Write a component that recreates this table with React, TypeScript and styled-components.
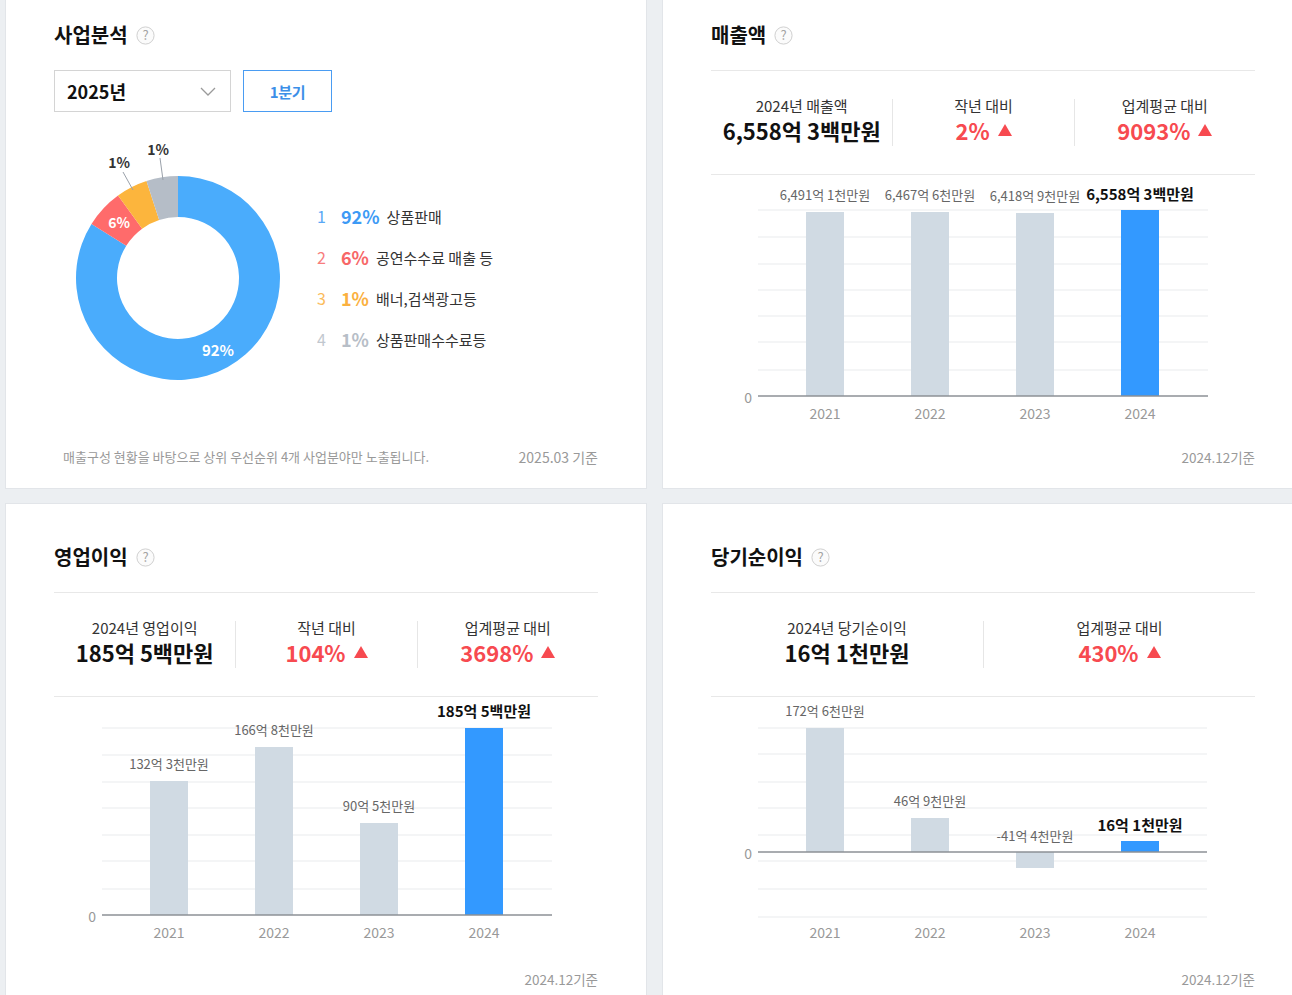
import React from "react";
import styled, { createGlobalStyle } from "styled-components";

const Global = createGlobalStyle`
  html, body { margin: 0; padding: 0; background: #eceff2; overflow: hidden; }
  body { font-family: "Noto Sans CJK KR", "Noto Sans", sans-serif; color: #222; }
  * { box-sizing: border-box; }
`;

const FONT = `"Noto Sans CJK KR", "Noto Sans", sans-serif`;
const RED = "#f74a50";

const Page = styled.div`
  display: grid;
  grid-template-columns: 642px 642px;
  column-gap: 15px;
  row-gap: 14px;
  padding-left: 5px;
  margin-top: -19px;
  width: 1320px;
`;

const Card = styled.section`
  height: 508px;
  background: #fff;
  border: 1px solid #e2e5e9;
  padding: 39px 48px 22px;
  display: flex;
  flex-direction: column;
`;

const TitleRow = styled.div`
  display: flex;
  align-items: center;
  gap: 8px;
  height: 28px;
`;

const Title = styled.h2`
  margin: 0;
  font-size: 20px;
  line-height: 28px;
  font-weight: 700;
  color: #111;
`;

const Controls = styled.div`
  display: flex;
  gap: 12px;
  margin-top: 21px;
  height: 42px;
`;

const Select = styled.div`
  width: 177px;
  height: 42px;
  border: 1px solid #d4d4d4;
  display: flex;
  align-items: center;
  justify-content: space-between;
  padding: 0 14px 0 12px;
  font-size: 18px;
  font-weight: 700;
  color: #111;
`;

const QuarterButton = styled.button`
  width: 89px;
  height: 42px;
  border: 1px solid #4a9cf2;
  background: #fff;
  color: #3c8fe8;
  font-family: inherit;
  font-size: 15px;
  font-weight: 700;
  letter-spacing: -0.3px;
  padding: 0;
`;

const DonutRow = styled.div`
  display: flex;
  margin-top: 19px;
`;

const DonutSvg = styled.svg`
  display: block;
  flex: 0 0 263px;
  font-family: ${FONT};
`;

const Legend = styled.ul`
  list-style: none;
  margin: 0;
  padding: 73px 0 0;
  display: flex;
  flex-direction: column;
  gap: 17px;
`;

const LegendItem = styled.li`
  display: flex;
  align-items: center;
  height: 24px;
`;

const LegendNo = styled.span<{ $c: string }>`
  width: 24px;
  font-size: 16px;
  color: ${(p) => p.$c};
  opacity: 0.85;
`;

const LegendPct = styled.span<{ $c: string }>`
  font-size: 18px;
  font-weight: 700;
  color: ${(p) => p.$c};
  margin-right: 7px;
`;

const LegendName = styled.span`
  font-size: 15px;
  color: #333;
`;

const Stats = styled.div<{ $cols: number }>`
  margin-top: 21px;
  border-top: 1px solid #e8e8e8;
  border-bottom: 1px solid #e8e8e8;
  padding: 28px 0;
  display: grid;
  grid-template-columns: repeat(${(p) => p.$cols}, 1fr);
`;

const Stat = styled.div`
  display: flex;
  flex-direction: column;
  align-items: center;
  height: 47px;
  & + & {
    border-left: 1px solid #e6e6e6;
  }
`;

const StatLabel = styled.div`
  font-size: 15px;
  line-height: 18px;
  margin-top: -2px;
  color: #333;
`;

const StatValue = styled.div<{ $red?: boolean }>`
  font-size: 22px;
  line-height: 30px;
  font-weight: 700;
  color: ${(p) => (p.$red ? RED : "#111")};
  display: flex;
  align-items: center;
  gap: 8px;
`;

const ChartSvg = styled.svg`
  display: block;
  margin-top: 1px;
  font-family: ${FONT};
`;

const Footer = styled.div<{ $split?: boolean }>`
  margin-top: auto;
  display: flex;
  justify-content: ${(p) => (p.$split ? "space-between" : "flex-end")};
  align-items: center;
  line-height: 18px;
  font-size: 13.5px;
  color: #999;
`;

const FooterNote = styled.span`
  padding-left: 9px;
  font-size: 13px;
  color: #999;
`;

const FooterDate = styled.span`
  font-size: 14px;
`;

const HelpIcon = () => (
  <svg width="19" height="19" viewBox="0 0 19 19">
    <circle cx="9.5" cy="9.5" r="8.6" fill="#fbfbfb" stroke="#cfcfcf" strokeWidth="1" />
    <text x="9.5" y="14" textAnchor="middle" fontSize="13" fill="#a3a3a3" fontFamily={FONT}>
      ?
    </text>
  </svg>
);

const Chevron = () => (
  <svg width="16" height="9" viewBox="0 0 16 9">
    <polyline points="1,1 8,8 15,1" fill="none" stroke="#9a9a9a" strokeWidth="1.3" />
  </svg>
);

const UpTriangle = () => (
  <svg width="14" height="12" viewBox="0 0 14 12">
    <polygon points="7,0 14,12 0,12" fill={RED} />
  </svg>
);

const Header = ({ title }: { title: string }) => (
  <TitleRow>
    <Title>{title}</Title>
    <HelpIcon />
  </TitleRow>
);

/* ---------- donut ---------- */
const CX = 124;
const CY = 147;
const pt = (r: number, a: number) => {
  const rad = (a * Math.PI) / 180;
  return [CX + r * Math.sin(rad), CY - r * Math.cos(rad)];
};
const arc = (r0: number, r1: number, a0: number, a1: number) => {
  const large = a1 - a0 > 180 ? 1 : 0;
  const [x0, y0] = pt(r1, a0);
  const [x1, y1] = pt(r1, a1);
  const [x2, y2] = pt(r0, a1);
  const [x3, y3] = pt(r0, a0);
  return `M${x0},${y0} A${r1},${r1} 0 ${large} 1 ${x1},${y1} L${x2},${y2} A${r0},${r0} 0 ${large} 0 ${x3},${y3} Z`;
};

const segments = [
  { a0: 0, a1: 302, fill: "#4aacfc" },
  { a0: 302, a1: 324, fill: "#ff6b6b" },
  { a0: 324, a1: 342, fill: "#fcb53d" },
  { a0: 342, a1: 360, fill: "#b5bdc7" },
];

const legend = [
  { no: "1", pct: "92%", name: "상품판매", c: "#3d9af5" },
  { no: "2", pct: "6%", name: "공연수수료 매출 등", c: "#f76767" },
  { no: "3", pct: "1%", name: "배너,검색광고등", c: "#fbb13f" },
  { no: "4", pct: "1%", name: "상품판매수수료등", c: "#b7bec7" },
];

const Donut = () => (
  <DonutSvg width="263" height="260" viewBox="0 0 263 260">
    {segments.map((s, i) => (
      <path key={i} d={arc(61, 102, s.a0, s.a1)} fill={s.fill} />
    ))}
    <line x1="69" y1="41" x2="79" y2="59" stroke="#9aa1aa" strokeWidth="1" />
    <line x1="106" y1="27" x2="109" y2="49" stroke="#9aa1aa" strokeWidth="1" />
    <text x="65" y="31" textAnchor="middle" dominantBaseline="central" fontSize="14" fontWeight="700" fill="#333">1%</text>
    <text x="104" y="18" textAnchor="middle" dominantBaseline="central" fontSize="14" fontWeight="700" fill="#333">1%</text>
    <text x="65" y="91" textAnchor="middle" dominantBaseline="central" fontSize="14" fontWeight="700" fill="#fff">6%</text>
    <text x="164" y="218" textAnchor="middle" dominantBaseline="central" fontSize="15" fontWeight="700" fill="#fff">92%</text>
  </DonutSvg>
);

/* ---------- bar chart ---------- */
type Bar = { year: string; label: string; y1: number; y2: number; ly: number; hi?: boolean };
type ChartProps = {
  x1: number;
  x2: number;
  grid: number[];
  base: number;
  centers: number[];
  axisY: number;
  bars: Bar[];
};

const BarChart = ({ x1, x2, grid, base, centers, axisY, bars }: ChartProps) => (
  <ChartSvg width="544" height="250" viewBox="0 0 544 250">
    {grid.map((y) => (
      <line key={y} x1={x1} x2={x2} y1={y} y2={y} stroke="#f1f2f3" strokeWidth="1.6" />
    ))}
    {bars.map((b, i) => (
      <rect
        key={b.year}
        x={centers[i] - 19}
        width="38"
        y={Math.min(b.y1, b.y2)}
        height={Math.abs(b.y2 - b.y1)}
        fill={b.hi ? "#3399ff" : "#d0dae3"}
      />
    ))}
    <line x1={x1} x2={x2} y1={base} y2={base} stroke="#8d9196" strokeWidth="1.6" />
    <text x={x1 - 6} y={base + 1} textAnchor="end" dominantBaseline="central" fontSize="14" fill="#999">0</text>
    {bars.map((b, i) => (
      <text
        key={"l" + b.year}
        x={centers[i]}
        y={b.ly}
        textAnchor="middle"
        dominantBaseline="central"
        fontSize={b.hi ? 15 : 13}
        fontWeight={b.hi ? 700 : 400}
        fill={b.hi ? "#111" : "#666"}
      >
        {b.label}
      </text>
    ))}
    {bars.map((b, i) => (
      <text key={"a" + b.year} x={centers[i]} y={axisY} textAnchor="middle" dominantBaseline="central" fontSize="14" fill="#999">
        {b.year}
      </text>
    ))}
  </ChartSvg>
);

const salesBars: Bar[] = [
  { year: "2021", label: "6,491억 1천만원", y1: 36, y2: 220, ly: 18 },
  { year: "2022", label: "6,467억 6천만원", y1: 36, y2: 220, ly: 18 },
  { year: "2023", label: "6,418억 9천만원", y1: 37, y2: 220, ly: 19 },
  { year: "2024", label: "6,558억 3백만원", y1: 34, y2: 220, ly: 17, hi: true },
];

const opBars: Bar[] = [
  { year: "2021", label: "132억 3천만원", y1: 83, y2: 217, ly: 65 },
  { year: "2022", label: "166억 8천만원", y1: 49, y2: 217, ly: 31 },
  { year: "2023", label: "90억 5천만원", y1: 125, y2: 217, ly: 107 },
  { year: "2024", label: "185억 5백만원", y1: 30, y2: 217, ly: 12, hi: true },
];

const netBars: Bar[] = [
  { year: "2021", label: "172억 6천만원", y1: 30, y2: 154, ly: 12 },
  { year: "2022", label: "46억 9천만원", y1: 120, y2: 154, ly: 102 },
  { year: "2023", label: "-41억 4천만원", y1: 154, y2: 170, ly: 137 },
  { year: "2024", label: "16억 1천만원", y1: 143, y2: 154, ly: 126, hi: true },
];

type StatItem = { label: string; value: string; red?: boolean };

const StatsBlock = ({ items }: { items: StatItem[] }) => (
  <Stats $cols={items.length}>
    {items.map((s) => (
      <Stat key={s.label}>
        <StatLabel>{s.label}</StatLabel>
        <StatValue $red={s.red}>
          {s.value}
          {s.red && <UpTriangle />}
        </StatValue>
      </Stat>
    ))}
  </Stats>
);

export default function App() {
  return (
    <>
      <Global />
      <Page>
        <Card>
          <Header title="사업분석" />
          <Controls>
            <Select>
              2025년
              <Chevron />
            </Select>
            <QuarterButton>1분기</QuarterButton>
          </Controls>
          <DonutRow>
            <Donut />
            <Legend>
              {legend.map((l) => (
                <LegendItem key={l.no}>
                  <LegendNo $c={l.c}>{l.no}</LegendNo>
                  <LegendPct $c={l.c}>{l.pct}</LegendPct>
                  <LegendName>{l.name}</LegendName>
                </LegendItem>
              ))}
            </Legend>
          </DonutRow>
          <Footer $split>
            <FooterNote>매출구성 현황을 바탕으로 상위 우선순위 4개 사업분야만 노출됩니다.</FooterNote>
            <FooterDate>2025.03 기준</FooterDate>
          </Footer>
        </Card>

        <Card>
          <Header title="매출액" />
          <StatsBlock
            items={[
              { label: "2024년 매출액", value: "6,558억 3백만원" },
              { label: "작년 대비", value: "2%", red: true },
              { label: "업계평균 대비", value: "9093%", red: true },
            ]}
          />
          <BarChart
            x1={47}
            x2={497}
            grid={[34, 61, 88, 114, 140, 166, 194]}
            base={220}
            centers={[114, 219, 324, 429]}
            axisY={237}
            bars={salesBars}
          />
          <Footer>2024.12기준</Footer>
        </Card>

        <Card>
          <Header title="영업이익" />
          <StatsBlock
            items={[
              { label: "2024년 영업이익", value: "185억 5백만원" },
              { label: "작년 대비", value: "104%", red: true },
              { label: "업계평균 대비", value: "3698%", red: true },
            ]}
          />
          <BarChart
            x1={48}
            x2={498}
            grid={[30, 57, 84, 110, 137, 163, 191]}
            base={217}
            centers={[115, 220, 325, 430]}
            axisY={234}
            bars={opBars}
          />
          <Footer>2024.12기준</Footer>
        </Card>

        <Card>
          <Header title="당기순이익" />
          <StatsBlock
            items={[
              { label: "2024년 당기순이익", value: "16억 1천만원" },
              { label: "업계평균 대비", value: "430%", red: true },
            ]}
          />
          <BarChart
            x1={47}
            x2={496}
            grid={[30, 56, 84, 110, 137, 163, 191, 219]}
            base={154}
            centers={[114, 219, 324, 429]}
            axisY={234}
            bars={netBars}
          />
          <Footer>2024.12기준</Footer>
        </Card>
      </Page>
    </>
  );
}
